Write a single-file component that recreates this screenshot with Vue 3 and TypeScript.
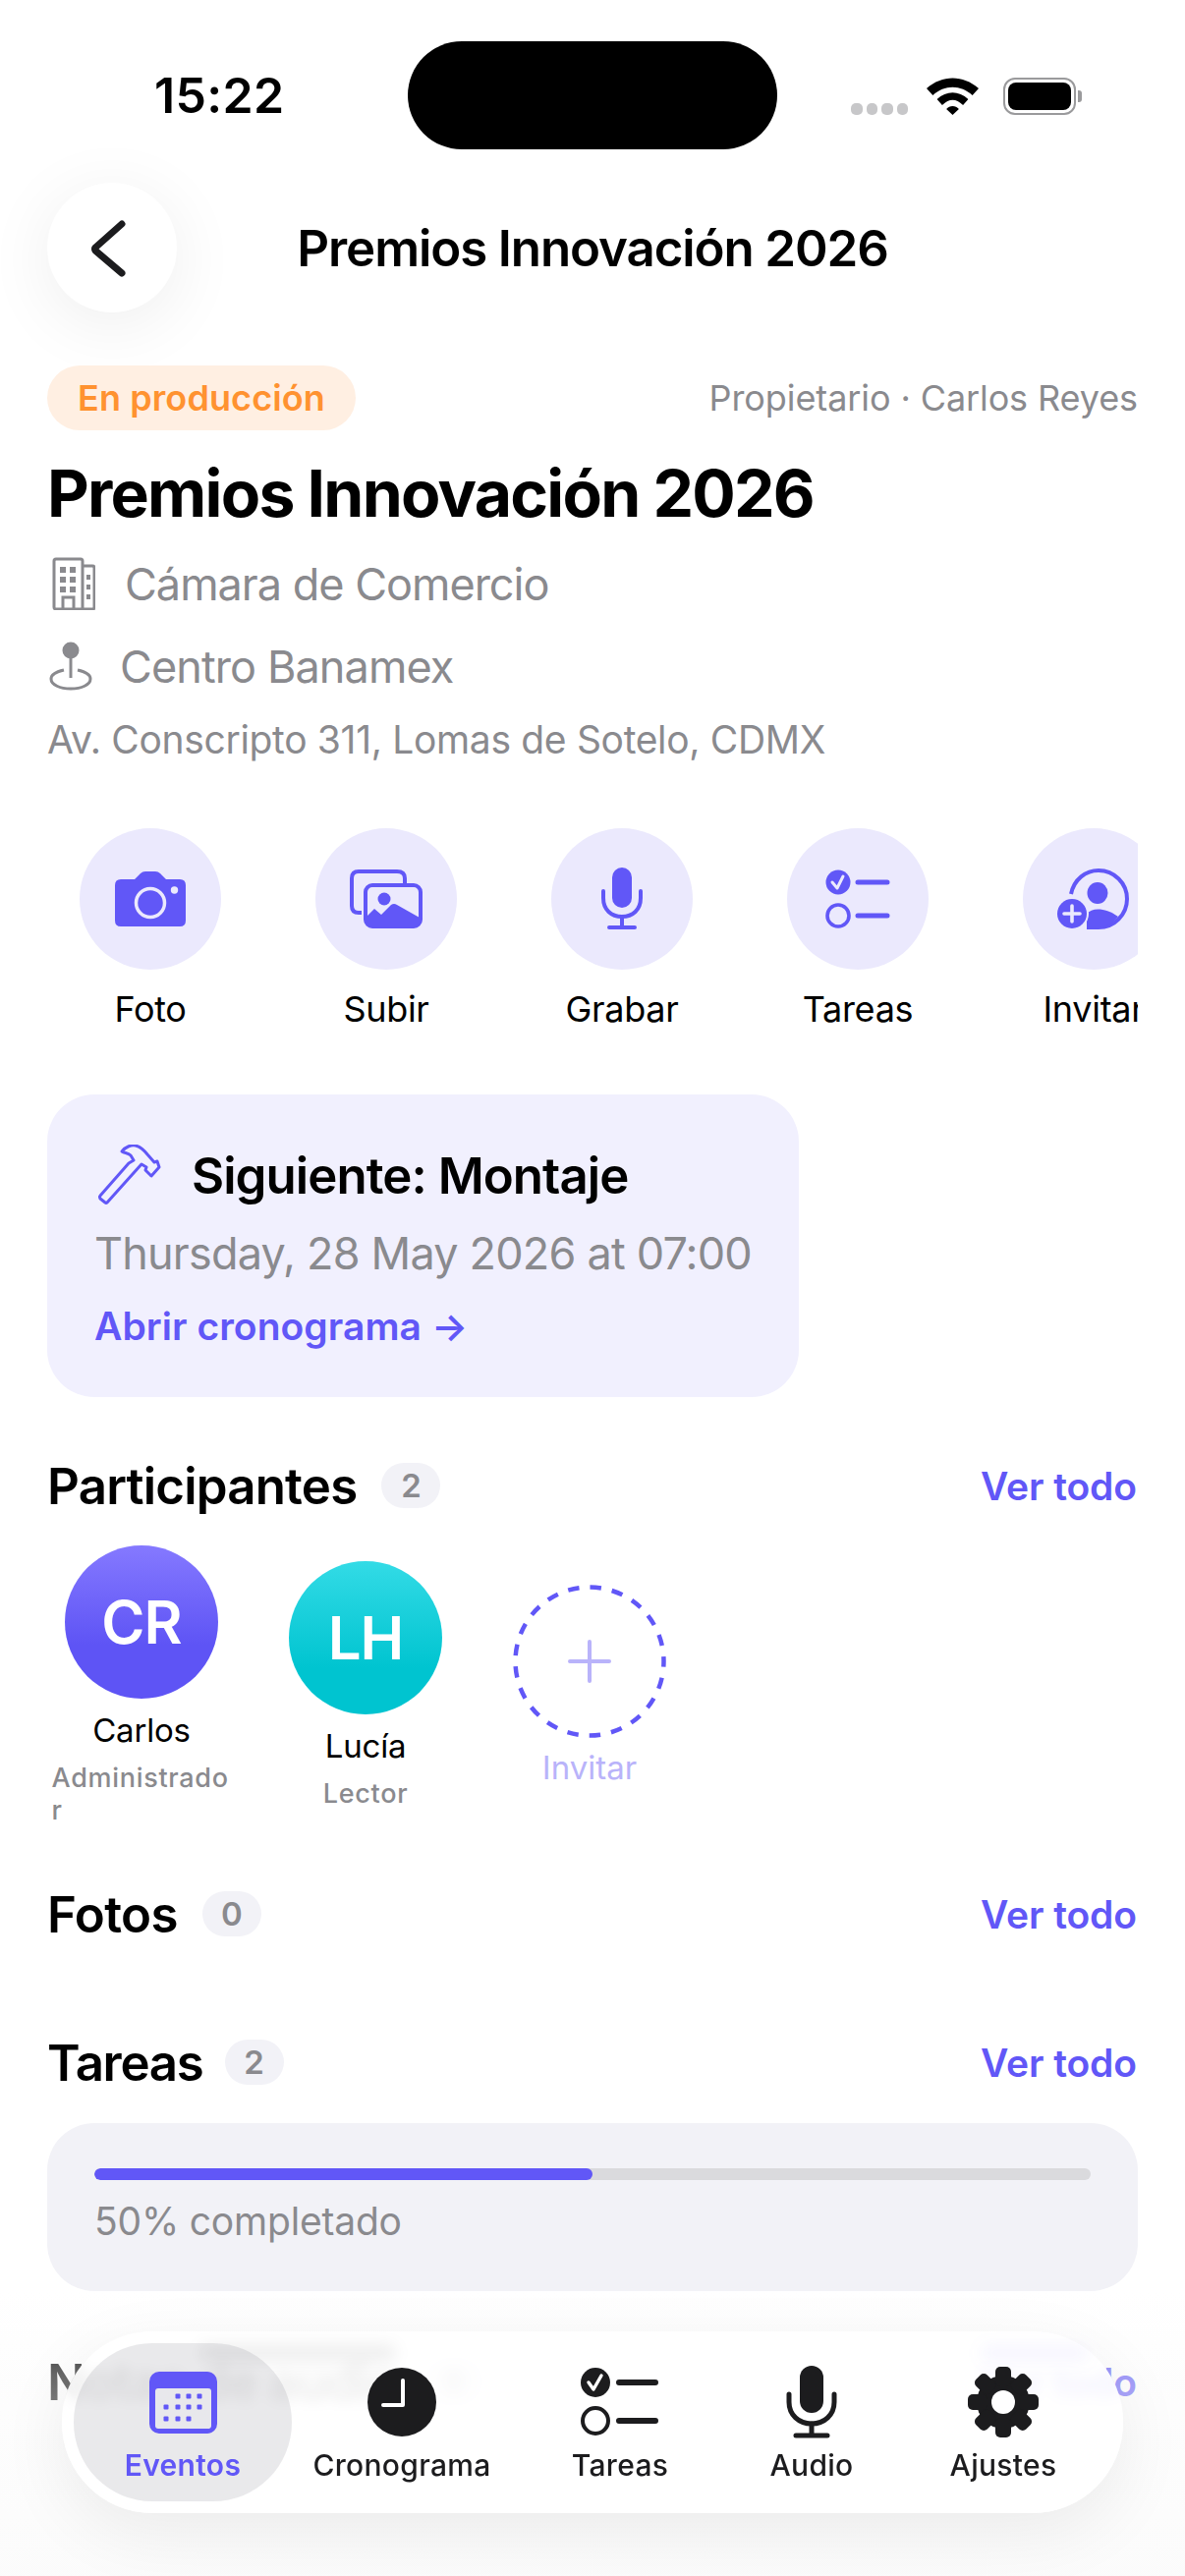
<script setup lang="ts">
interface Action {
  id: string
  label: string
}

interface Tab {
  id: string
  label: string
}

const actions: Action[] = [
  { id: 'camera', label: 'Foto' },
  { id: 'upload', label: 'Subir' },
  { id: 'mic', label: 'Grabar' },
  { id: 'tasks', label: 'Tareas' },
  { id: 'invite', label: 'Invitar' },
]

const tabs: Tab[] = [
  { id: 'events', label: 'Eventos' },
  { id: 'clock', label: 'Cronograma' },
  { id: 'tasks', label: 'Tareas' },
  { id: 'audio', label: 'Audio' },
  { id: 'settings', label: 'Ajustes' },
]

const calendarDots = [
  [29, 25], [40, 25], [51, 25],
  [17, 36], [29, 36], [40, 36], [51, 36],
  [17, 48], [29, 48], [40, 48],
]

const gearTeeth = [0, 45, 90, 135, 180, 225, 270, 315]
</script>

<template>
  <div class="screen">
    <div class="status">
      <div class="time">15:22</div>
      <div class="island"></div>
      <div class="status-icons">
        <div class="signal"><i></i><i></i><i></i><i></i></div>
        <svg class="wifi" width="53" height="38" viewBox="0 0 50 38" preserveAspectRatio="none">
          <path d="M0 11 C15 -3 35 -3 50 11 L44 18 C33 7 17 7 6 18 Z" fill="#000" />
          <path d="M10 22 C19 13 31 13 40 22 L35 28 C28 21 22 21 15 28 Z" fill="#000" />
          <path d="M19 32 C22 28 28 28 31 32 L25 38 Z" fill="#000" />
        </svg>
        <div class="battery"><div class="battery-fill"></div></div>
        <div class="battery-tip"></div>
      </div>
    </div>

    <main class="content">
      <header class="nav">
        <button class="back" type="button" aria-label="Volver">
          <svg width="48" height="60" viewBox="0 0 48 60">
            <path d="M34 6 L7 30 Q6 31 7 33 L34 56" fill="none" stroke="#1c1c1e" stroke-width="7" stroke-linecap="round" stroke-linejoin="round" />
          </svg>
        </button>
        <div class="nav-title">Premios Innovación 2026</div>
        <div></div>
      </header>

      <div class="meta-row">
        <span class="pill">En producción</span>
        <span class="owner">Propietario · Carlos Reyes</span>
      </div>

      <h1 class="event-title">Premios Innovación 2026</h1>

      <div class="info-row org">
        <svg width="44" height="54" viewBox="0 0 44 54" fill="none" stroke="#8a8a8e" stroke-width="3">
          <path d="M31 9 H41 Q43 9 43 11 V51 Q43 53 41 53 H4 Q2 53 2 51 V4 Q2 2 4 2 H29 Q31 2 31 4 V53" />
          <path d="M11 53 V41 H22 V53" />
          <g fill="#8a8a8e" stroke="none">
            <rect x="8" y="10" width="6" height="6" /><rect x="18" y="10" width="6" height="6" />
            <rect x="8" y="20" width="6" height="6" /><rect x="18" y="20" width="6" height="6" />
            <rect x="8" y="30" width="6" height="6" /><rect x="18" y="30" width="6" height="6" />
            <rect x="35" y="18" width="4" height="5" /><rect x="35" y="28" width="4" height="5" /><rect x="35" y="38" width="4" height="5" />
          </g>
        </svg>
        <span>Cámara de Comercio</span>
      </div>

      <div class="info-row place">
        <svg width="44" height="50" viewBox="0 0 44 50" fill="none" stroke="#8a8a8e" stroke-width="3">
          <circle cx="22" cy="9" r="7" fill="#8a8a8e" />
          <path d="M22 16 V37" />
          <path d="M15 29 C6 31 2 34 2 38 C2 44 11 48 22 48 C33 48 42 44 42 38 C42 34 38 31 29 29" />
        </svg>
        <span>Centro Banamex</span>
      </div>

      <div class="address">Av. Conscripto 311, Lomas de Sotelo, CDMX</div>

      <div class="actions">
        <div v-for="action in actions" :key="action.id" class="action">
          <div class="action-circle">
            <svg v-if="action.id === 'camera'" width="72" height="56" viewBox="0 0 72 56">
              <path d="M6 8 H20 L26 2 Q28 0 31 0 H41 Q44 0 46 2 L52 8 H66 Q72 8 72 14 V50 Q72 56 66 56 H6 Q0 56 0 50 V14 Q0 8 6 8 Z" fill="#6157f7" />
              <circle cx="36" cy="32" r="14.5" fill="#6157f7" stroke="#ebe9fd" stroke-width="3.5" />
              <circle cx="60.5" cy="19" r="3.7" fill="#ebe9fd" />
            </svg>
            <svg v-else-if="action.id === 'upload'" width="74" height="60" viewBox="0 0 74 60">
              <path d="M12 44 H9 Q2 44 2 37 V9 Q2 2 9 2 H48 Q56 2 56 9 V14" fill="none" stroke="#6157f7" stroke-width="4" />
              <rect x="16" y="16" width="56" height="42" rx="7" fill="#ebe9fd" stroke="#6157f7" stroke-width="4" />
              <circle cx="35" cy="30" r="6.5" fill="#6157f7" />
              <path d="M17 48 L25 40 L32 46 L42 36 Q45 34 48 36 L71 49 V52 Q71 58 65 58 H23 Q17 58 17 52 Z" fill="#6157f7" />
            </svg>
            <svg v-else-if="action.id === 'mic'" width="44" height="64" viewBox="0 0 44 64">
              <rect x="12" y="0" width="20" height="41" rx="10" fill="#6157f7" />
              <path d="M3 24 V31 C3 43 11 50 22 50 C33 50 41 43 41 31 V24" fill="none" stroke="#6157f7" stroke-width="4" stroke-linecap="round" />
              <path d="M22 50 V61 M9 61 H35" fill="none" stroke="#6157f7" stroke-width="4" stroke-linecap="round" />
            </svg>
            <svg v-else-if="action.id === 'tasks'" width="66" height="60" viewBox="0 0 66 60">
              <circle cx="13" cy="13" r="12.5" fill="#6157f7" />
              <path d="M7 13 L12 19 L18 7" fill="none" stroke="#ebe9fd" stroke-width="3" stroke-linecap="round" stroke-linejoin="round" />
              <circle cx="13" cy="47" r="11" fill="none" stroke="#6157f7" stroke-width="3.6" />
              <path d="M33 13 H63 M33 47 H63" stroke="#6157f7" stroke-width="5" stroke-linecap="round" />
            </svg>
            <svg v-else width="74" height="62" viewBox="0 0 74 62">
              <path d="M14 26 C17 11 29 2 42 2 C58 2 71 15 71 31 C71 47 58 60 42 60 H30" fill="none" stroke="#6157f7" stroke-width="4" />
              <ellipse cx="41" cy="25" rx="10.5" ry="11" fill="#6157f7" />
              <path d="M30 60 V46 C35 40 48 39 62 49 C56 56 49 60 42 60 Z" fill="#6157f7" />
              <circle cx="15" cy="46" r="17" fill="#ebe9fd" />
              <circle cx="15" cy="46" r="15" fill="#6157f7" />
              <path d="M15 38 V54 M7 46 H23" stroke="#ebe9fd" stroke-width="3.6" stroke-linecap="round" />
            </svg>
          </div>
          <span class="action-label">{{ action.label }}</span>
        </div>
      </div>

      <section class="next-card">
        <div class="next-title">
          <svg width="64" height="62" viewBox="0 0 64 62" fill="none" stroke="#6157f7" stroke-width="3" stroke-linejoin="round">
            <path d="M24 7 C28 2 34 0 38 1 C42 2 46 5 50 10 L57 18 L60 17 L62 23 L54 32 L48 26 L49 23 L44 20 L9 59 Q8 60 7 59 L2 55 Q1 53 2 52 L31 19 L36 16 L33 11 C30 8 27 9 24 7 Z" />
          </svg>
          <span>Siguiente: Montaje</span>
        </div>
        <div class="next-date">Thursday, 28 May 2026 at 07:00</div>
        <div class="next-link">Abrir cronograma →</div>
      </section>

      <div class="section-head participants-head">
        <h2>Participantes</h2>
        <span class="count">2</span>
        <a class="see-all">Ver todo</a>
      </div>

      <div class="people">
        <div class="person">
          <div class="avatar avatar-cr">CR</div>
          <div class="person-name">Carlos</div>
          <div class="person-role">Administrador</div>
        </div>
        <div class="person">
          <div class="avatar avatar-lh">LH</div>
          <div class="person-name">Lucía</div>
          <div class="person-role">Lector</div>
        </div>
        <div class="person">
          <div class="avatar">
            <svg width="156" height="156" viewBox="0 0 156 156" fill="none">
              <circle cx="78" cy="78" r="75.5" stroke="#6157f7" stroke-width="4.5" stroke-dasharray="11.5 11.09" stroke-dashoffset="5.75" />
              <path d="M78 58 V98 M58 78 H98" stroke="#b9b3fa" stroke-width="4" stroke-linecap="round" />
            </svg>
          </div>
          <div class="invite-label">Invitar</div>
        </div>
      </div>

      <div class="section-head photos-head">
        <h2>Fotos</h2>
        <span class="count">0</span>
        <a class="see-all">Ver todo</a>
      </div>

      <div class="section-head tasks-head">
        <h2>Tareas</h2>
        <span class="count">2</span>
        <a class="see-all">Ver todo</a>
      </div>

      <section class="progress-card">
        <div class="progress-track"><div class="progress-fill" :style="{ width: '50%' }"></div></div>
        <div class="progress-text">50% completado</div>
      </section>

      <div class="section-head notes-head">
        <h2>Notas de audio</h2>
        <span class="count">0</span>
        <a class="see-all">Ver todo</a>
      </div>
    </main>

    <div class="veil"></div>

    <nav class="tabbar">
      <div class="smear smear-dark"></div>
      <div class="smear smear-purple"></div>
      <div v-for="tab in tabs" :key="tab.id" class="tab" :class="{ active: tab.id === 'events' }">
        <div class="tab-icon">
          <svg v-if="tab.id === 'events'" width="69" height="63" viewBox="0 0 69 63">
            <rect width="69" height="63" rx="10" fill="#6157f7" />
            <rect x="6" y="17" width="57" height="41" rx="3" fill="#e8e8ec" />
            <rect v-for="(d, i) in calendarDots" :key="i" :x="d[0] - 2.5" :y="d[1] - 2.5" width="5" height="5" rx="1" fill="#6157f7" />
          </svg>
          <svg v-else-if="tab.id === 'clock'" width="70" height="70" viewBox="0 0 70 70">
            <circle cx="35" cy="35" r="35" fill="#1c1c1e" />
            <path d="M36 13 V38 H16" fill="none" stroke="#fff" stroke-width="4" stroke-linecap="round" stroke-linejoin="round" />
          </svg>
          <svg v-else-if="tab.id === 'tasks'" width="80" height="70" viewBox="0 0 80 70">
            <circle cx="15" cy="15" r="15" fill="#1c1c1e" />
            <path d="M8 15 L13 22 L21 8" fill="none" stroke="#fff" stroke-width="3.4" stroke-linecap="round" stroke-linejoin="round" />
            <circle cx="15" cy="54" r="13" fill="none" stroke="#1c1c1e" stroke-width="4" />
            <path d="M39 15 H76 M39 54 H76" stroke="#1c1c1e" stroke-width="6" stroke-linecap="round" />
          </svg>
          <svg v-else-if="tab.id === 'audio'" width="52" height="74" viewBox="0 0 52 74">
            <rect x="14" y="0" width="24" height="48" rx="12" fill="#1c1c1e" />
            <path d="M3 29 V37 C3 50 13 59 26 59 C39 59 49 50 49 37 V29" fill="none" stroke="#1c1c1e" stroke-width="5" stroke-linecap="round" />
            <path d="M26 59 V71 M10 71 H42" fill="none" stroke="#1c1c1e" stroke-width="5" stroke-linecap="round" />
          </svg>
          <svg v-else width="72" height="72" viewBox="0 0 72 72">
            <circle cx="36" cy="36" r="27" fill="#1c1c1e" />
            <rect v-for="a in gearTeeth" :key="a" x="28" y="0" width="16" height="20" rx="5" fill="#1c1c1e" :transform="`rotate(${a} 36 36)`" />
            <circle cx="36" cy="36" r="12" fill="#fff" />
          </svg>
        </div>
        <span class="tab-label">{{ tab.label }}</span>
      </div>
    </nav>
  </div>
</template>

<style scoped>
.screen {
  position: relative;
  width: 1206px;
  height: 2622px;
  overflow: hidden;
  background: #fff;
  color: #000;
  font-family: Inter, "Noto Sans", sans-serif;
}
.status {
  display: flex;
  align-items: flex-start;
  height: 186px;
  padding-top: 42px;
  box-sizing: border-box;
}
.time {
  width: 415px;
  padding-left: 157px;
  box-sizing: border-box;
  margin-top: 28px;
  font-size: 50px;
  line-height: 54px;
  font-weight: 600;
  letter-spacing: 0.3px;
}
.island {
  width: 376px;
  height: 110px;
  border-radius: 55px;
  background: #000;
}
.status-icons {
  display: flex;
  align-items: center;
  margin-left: 75px;
  margin-top: 37px;
  height: 38px;
}
.signal {
  display: flex;
  gap: 4px;
  align-self: flex-end;
}
.signal i {
  width: 11.5px;
  height: 12px;
  border-radius: 5px;
  background: #c7c7c9;
}
.wifi {
  margin-left: 19px;
}
.battery {
  width: 74px;
  height: 38px;
  margin-left: 25px;
  padding: 3px;
  box-sizing: border-box;
  border: 2px solid #9a9a9c;
  border-radius: 12px;
}
.battery-fill {
  width: 100%;
  height: 100%;
  background: #000;
  border-radius: 8px;
}
.battery-tip {
  width: 4px;
  height: 12px;
  margin-left: 2px;
  border-radius: 0 3px 3px 0;
  background: #9a9a9c;
}
.content {
  padding: 0 48px;
}
.nav {
  display: grid;
  grid-template-columns: 132px 1fr 132px;
  align-items: center;
  height: 132px;
}
.back {
  display: flex;
  align-items: center;
  justify-content: center;
  width: 132px;
  height: 132px;
  padding: 0;
  border: none;
  border-radius: 50%;
  background: #fff;
  box-shadow: 0 12px 70px rgba(0, 0, 0, 0.07);
}
.nav-title {
  text-align: center;
  font-size: 51px;
  font-weight: 600;
  letter-spacing: -1.1px;
}
.meta-row {
  display: flex;
  align-items: center;
  justify-content: space-between;
  height: 66px;
  margin-top: 54px;
}
.pill {
  display: flex;
  align-items: center;
  height: 66px;
  padding: 0 31px;
  border-radius: 33px;
  background: #ffefe2;
  color: #ff9230;
  font-size: 36px;
  font-weight: 600;
  letter-spacing: 0.1px;
}
.owner {
  color: #8a8a8e;
  font-size: 36px;
  letter-spacing: -0.1px;
}
.event-title {
  margin: 24px 0 0;
  font-size: 66px;
  line-height: 80px;
  font-weight: 700;
  letter-spacing: -1.75px;
}
.info-row {
  display: flex;
  align-items: center;
  height: 60px;
  margin-top: 24px;
  color: #8a8a8e;
  font-size: 45px;
  letter-spacing: -1px;
}
.org {
  margin-top: 22px;
  padding-left: 5px;
  gap: 30px;
}
.place {
  padding-left: 2px;
  gap: 28px;
  letter-spacing: -0.9px;
}
.address {
  margin-top: 22px;
  color: #8a8a8e;
  font-size: 39px;
  line-height: 46px;
  letter-spacing: -0.33px;
}
.actions {
  display: flex;
  gap: 30px;
  margin-top: 67px;
  overflow: hidden;
}
.action {
  display: flex;
  flex: 0 0 210px;
  flex-direction: column;
  align-items: center;
}
.action-circle {
  display: flex;
  align-items: center;
  justify-content: center;
  width: 144px;
  height: 144px;
  border-radius: 50%;
  background: #ebe9fd;
}
.action-label {
  margin-top: 18px;
  font-size: 36px;
  line-height: 44px;
  letter-spacing: -0.3px;
}
.next-card {
  width: 765px;
  height: 308px;
  margin-top: 65px;
  padding: 48px;
  box-sizing: border-box;
  border-radius: 48px;
  background: #f1f0fe;
}
.next-title {
  display: flex;
  align-items: center;
  gap: 31px;
  height: 68px;
  margin-bottom: 2px;
  padding-left: 4px;
  font-size: 51px;
  font-weight: 600;
  letter-spacing: -0.95px;
}
.next-date {
  margin-top: 17px;
  color: #8a8a8e;
  font-size: 45px;
  line-height: 58px;
  letter-spacing: -0.8px;
  white-space: nowrap;
}
.next-link {
  margin-top: 22px;
  color: #6157f7;
  font-size: 39px;
  line-height: 46px;
  font-weight: 600;
  letter-spacing: 0.05px;
}
.section-head {
  display: flex;
  align-items: center;
  height: 66px;
}
.section-head h2 {
  margin: 0;
  font-size: 51px;
  font-weight: 600;
  letter-spacing: -0.8px;
}
.count {
  display: flex;
  align-items: center;
  justify-content: center;
  width: 60px;
  height: 46px;
  margin-left: 25px;
  border-radius: 23px;
  background: #f2f2f7;
  color: #8a8a8e;
  font-size: 33px;
  font-weight: 600;
}
.see-all {
  margin-left: auto;
  margin-right: 1px;
  color: #6157f7;
  font-size: 39px;
  font-weight: 600;
  letter-spacing: -0.1px;
}
.participants-head {
  margin-top: 57px;
}
.people {
  display: flex;
  align-items: center;
  gap: 36px;
  margin-top: 28px;
}
.person {
  display: flex;
  flex-direction: column;
  align-items: center;
  width: 192px;
}
.person + .person {
  margin-bottom: 2px;
}
.avatar {
  display: flex;
  align-items: center;
  justify-content: center;
  width: 156px;
  height: 156px;
  border-radius: 50%;
  color: #fff;
  font-size: 60px;
  font-weight: 600;
  letter-spacing: -1px;
}
.avatar-cr {
  background: linear-gradient(180deg, #8579ff 0%, #5e54f5 65%);
}
.avatar-lh {
  background: linear-gradient(180deg, #33dbe6 0%, #00c4d0 70%);
}
.person-name {
  margin-top: 10px;
  font-size: 33px;
  line-height: 44px;
  letter-spacing: -0.2px;
}
.person-role {
  width: fit-content;
  max-width: 183px;
  margin-top: 10px;
  color: #8a8a8e;
  font-size: 27px;
  line-height: 33px;
  font-weight: 500;
  letter-spacing: 0.7px;
  word-break: break-all;
}
.invite-label {
  margin-top: 12px;
  color: #b9b3fa;
  font-size: 33px;
  line-height: 36px;
}
.photos-head {
  margin-top: 56px;
}
.photos-head h2 {
  letter-spacing: -0.6px;
}
.tasks-head {
  margin-top: 85px;
}
.tasks-head h2 {
  letter-spacing: -1.3px;
}
.tasks-head .count {
  margin-left: 22px;
}
.progress-card {
  margin-top: 29px;
  padding: 46px 48px 48px;
  border-radius: 48px;
  background: #f2f2f7;
}
.progress-track {
  height: 12px;
  border-radius: 6px;
  background: #dadadd;
  overflow: hidden;
}
.progress-fill {
  height: 100%;
  border-radius: 6px;
  background: #6157f7;
}
.progress-text {
  margin-top: 19px;
  color: #8a8a8e;
  font-size: 39px;
  line-height: 46px;
  letter-spacing: -0.2px;
}
.notes-head {
  margin-top: 59px;
}
.veil {
  position: absolute;
  left: 0;
  right: 0;
  bottom: 0;
  height: 290px;
  background: linear-gradient(180deg, rgba(255, 255, 255, 0) 0%, rgba(251, 251, 251, 0.42) 30%, rgba(251, 251, 251, 0.9) 100%);
}
.tabbar {
  position: absolute;
  left: 63px;
  top: 2373px;
  display: grid;
  grid-template-columns: 222px 224px 220px 170px 220px;
  width: 1080px;
  height: 185px;
  padding: 12px;
  box-sizing: border-box;
  border-radius: 92px;
  background: rgba(255, 255, 255, 0.86);
  backdrop-filter: blur(7px);
  box-shadow: 0 20px 70px rgba(0, 0, 0, 0.07);
}
.smear {
  position: absolute;
  top: 14px;
  height: 16px;
  border-radius: 8px;
  filter: blur(8px);
}
.smear-dark {
  left: 140px;
  width: 200px;
  background: rgba(0, 0, 0, 0.07);
}
.smear-purple {
  left: 935px;
  width: 110px;
  background: rgba(97, 87, 247, 0.06);
}
.tab {
  position: relative;
  display: flex;
  flex-direction: column;
  align-items: center;
  height: 161px;
  padding-top: 20px;
  box-sizing: border-box;
  border-radius: 80px;
  color: #1c1c1e;
}
.tab.active {
  background: rgba(120, 120, 128, 0.16);
  color: #6157f7;
}
.tab-icon {
  display: flex;
  align-items: center;
  justify-content: center;
  height: 80px;
}
.tab-label {
  margin-top: 4px;
  font-size: 30px;
  line-height: 40px;
  font-weight: 500;
  letter-spacing: 0.3px;
}
.tab.active .tab-label {
  font-weight: 600;
}
</style>

<style>
html,
body {
  margin: 0;
  background: #fff;
}
</style>
